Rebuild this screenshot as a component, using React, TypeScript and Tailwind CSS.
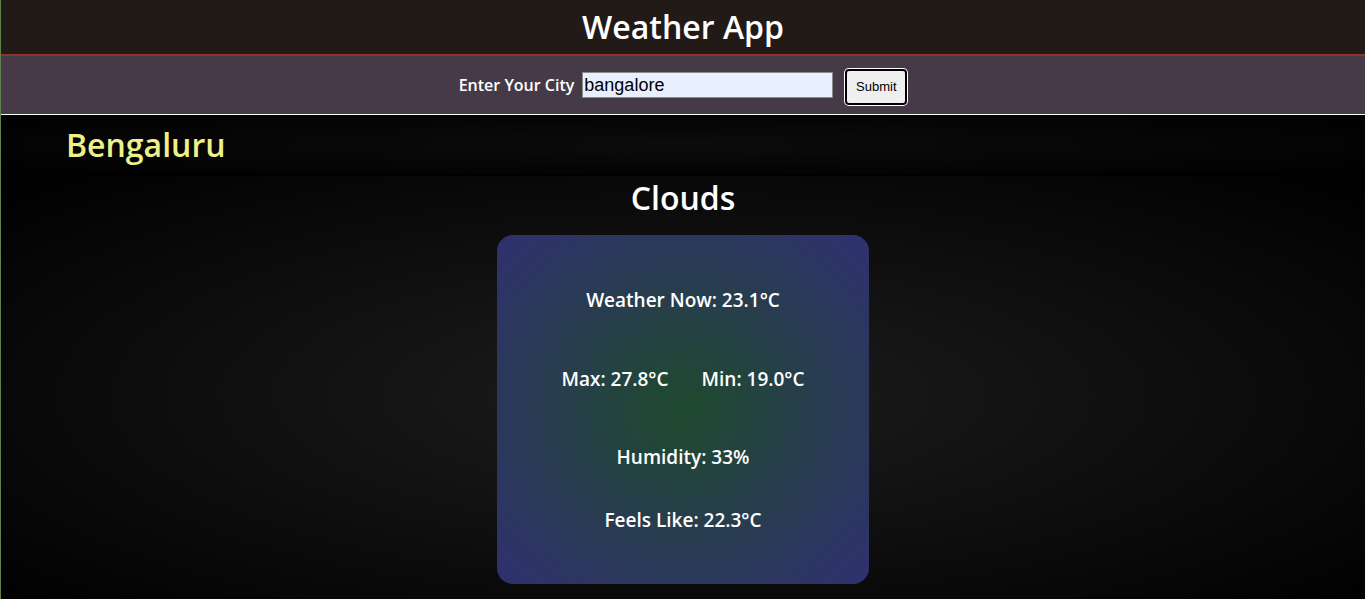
import React from "react";

export default function App() {
  return (
    <div
      className="min-h-[599px] w-full border-l border-[#5f7f4c] bg-black text-white"
      style={{ fontFamily: '"Open Sans", "Noto Sans", sans-serif' }}
    >
      <header className="flex h-[56px] items-center justify-center border-b-2 border-[#8c3524] bg-[#221a16]">
        <h1 className="text-[32px] font-semibold leading-none text-white">Weather App</h1>
      </header>
      <div className="flex h-[59px] items-center justify-center border-b border-white bg-[#463a48]">
        <label className="mr-2 text-[16px] font-semibold text-white">Enter Your City</label>
        <input
          value="bangalore"
          readOnly
          className="h-[26px] w-[251px] border border-[#8a8a8a] bg-[#e8f0fe] px-[1px] text-[18px] text-black outline-none"
          style={{ fontFamily: '"Liberation Sans", Arial, sans-serif' }}
        />
        <button
          className="ml-[12px] mt-[4px] h-[36px] w-[62px] rounded-[4px] border-2 border-black bg-[#efefef] text-[13px] text-black ring-1 ring-white"
          style={{ fontFamily: '"Liberation Sans", Arial, sans-serif' }}
        >
          Submit
        </button>
      </div>
      <div className="flex h-[61px] items-center border-b-2 border-black bg-[radial-gradient(#0c0c0c,#000)] pl-[65px]">
        <h2 className="text-[32px] font-semibold leading-none text-[#eef08a]">Bengaluru</h2>
      </div>
      <main className="flex min-h-[440px] flex-col items-center bg-[radial-gradient(#1d1d1d,#000)] pb-[20px]">
        <h3 className="h-[44px] text-[32px] font-semibold leading-[44px] text-white">Clouds</h3>
        <div className="mt-[15px] flex h-[349px] w-[372px] flex-col items-center rounded-[16px] bg-[radial-gradient(#1f4a2d,#303070)] text-[19px] font-semibold leading-[28px] text-white">
          <p className="mt-[51px]">Weather Now: 23.1°C</p>
          <div className="mt-[51px] flex gap-[33px]">
            <p>Max: 27.8°C</p>
            <p>Min: 19.0°C</p>
          </div>
          <p className="mt-[50px]">Humidity: 33%</p>
          <p className="mt-[35px]">Feels Like: 22.3°C</p>
        </div>
      </main>
    </div>
  );
}
